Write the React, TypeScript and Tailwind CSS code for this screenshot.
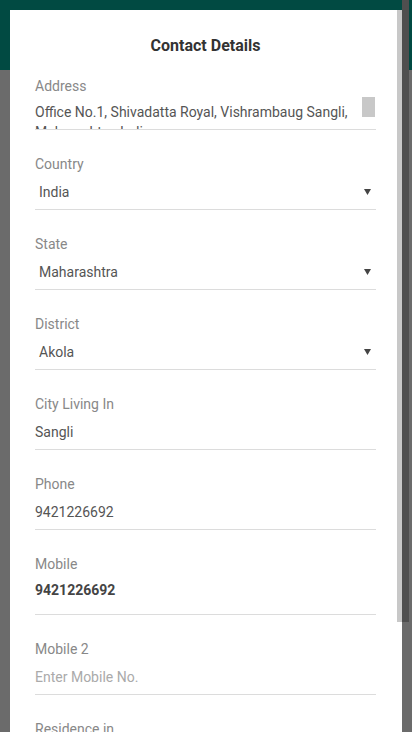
const fields = [
  { label: "Country", value: "India", kind: "select" },
  { label: "State", value: "Maharashtra", kind: "select" },
  { label: "District", value: "Akola", kind: "select" },
  { label: "City Living In", value: "Sangli", kind: "text" },
  { label: "Phone", value: "9421226692", kind: "text" },
];

function Arrow() {
  return (
    <svg width="7" height="7" viewBox="0 0 7 7" className="shrink-0">
      <path d="M0 1h7L3.5 7z" fill="#444" />
    </svg>
  );
}

export default function App() {
  return (
    <div
      className="relative h-[732px] w-[412px] overflow-hidden bg-[#6b6b6b]"
      style={{ fontFamily: "Roboto, 'Liberation Sans', sans-serif" }}
    >
      {/* dimmed app behind */}
      <div className="h-[70px] bg-[#014a42]" />
      <div className="absolute right-[3px] top-0 h-[622px] w-[7px] bg-[#4f4f4f]" />

      {/* modal */}
      <div className="absolute left-[10px] top-[10px] bottom-0 w-[392px] bg-white pl-[25px] pr-[26px] pt-[21px]">
        <div className="absolute right-0 top-0 h-[612px] w-[5px] bg-[#c8c8c8]" />

        <h2 className="text-center text-base font-bold leading-[30px] text-[#333]">Contact Details</h2>

        {/* Address */}
        <div className="mt-[15px]">
          <div className="text-sm leading-5 text-[#888]">Address</div>
          <div className="relative h-[34px] overflow-hidden border-b border-[#dcdcdc] pt-[6px] text-sm leading-5 text-[#555]">
            <div className="pr-6">Office No.1, Shivadatta Royal, Vishrambaug Sangli,</div>
            <div>Maharashtra, India</div>
            <div className="absolute right-px top-px h-5 w-[13px] bg-[#c8c8c8]" />
          </div>
        </div>

        {fields.map((f) => (
          <div key={f.label} className="mt-6">
            <div className="text-sm leading-5 text-[#888]">{f.label}</div>
            <div
              className={
                f.kind === "select"
                  ? "flex h-9 items-center justify-between border-b border-[#dcdcdc] pl-1 pr-[5px] text-sm text-[#555]"
                  : "flex h-9 items-center border-b border-[#dcdcdc] text-sm text-[#555]"
              }
            >
              <span>{f.value}</span>
              {f.kind === "select" && <Arrow />}
            </div>
          </div>
        ))}

        {/* Mobile */}
        <div className="mt-6">
          <div className="text-sm leading-5 text-[#888]">Mobile</div>
          <div className="h-[41px] border-b border-[#dcdcdc] pt-[6px] text-sm font-bold leading-5 text-[#444]">
            9421226692
          </div>
        </div>

        {/* Mobile 2 */}
        <div className="mt-6">
          <div className="text-sm leading-5 text-[#888]">Mobile 2</div>
          <div className="flex h-9 items-center border-b border-[#dcdcdc] text-sm text-[#aaa]">
            Enter Mobile No.
          </div>
        </div>

        <div className="mt-6">
          <div className="text-sm leading-5 text-[#888]">Residence in</div>
        </div>
      </div>
    </div>
  );
}
